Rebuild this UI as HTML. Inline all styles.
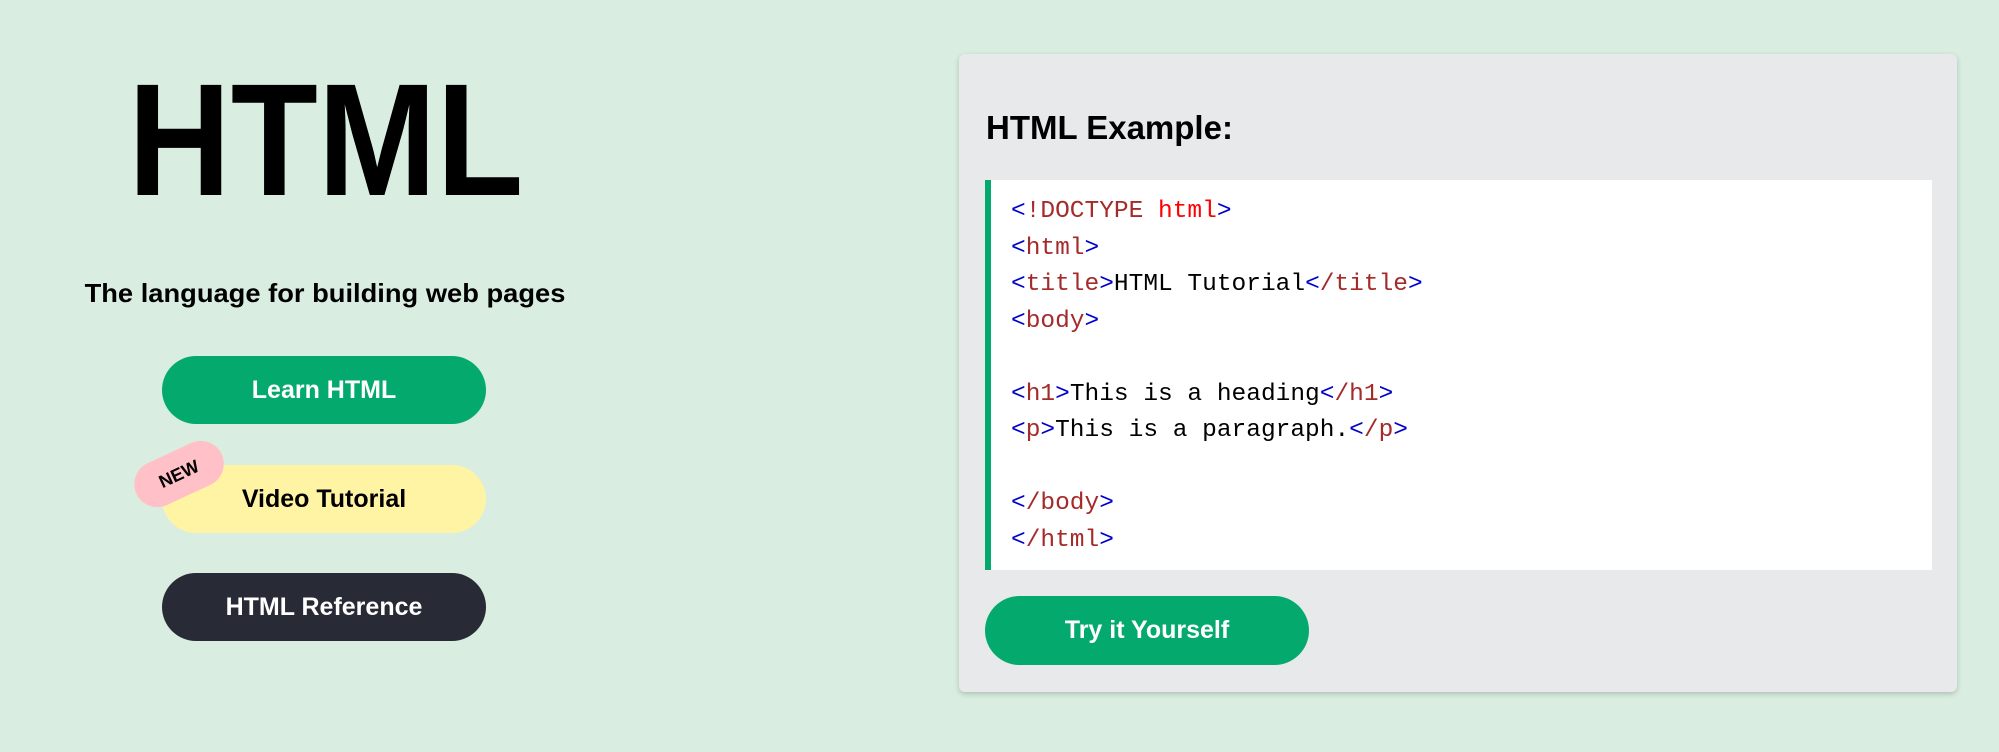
<!DOCTYPE html>
<html><head><style>
body{margin:0;width:1999px;height:752px;background:#d9eee1;font-family:"Liberation Sans",sans-serif;position:relative;overflow:hidden}
.big{position:absolute;left:128px;top:60px;width:395px;font-size:160px;font-weight:bold;line-height:160px;color:#000;white-space:nowrap;transform-origin:0 0;transform:scaleX(0.89)}
.tag{position:absolute;left:40px;width:570px;top:278px;text-align:center;font-size:26px;font-weight:bold;transform:scaleX(1.05)}
.btn{position:absolute;left:162px;width:324px;height:68px;border-radius:34px;text-align:center;line-height:68px;font-size:25px;font-weight:bold}
.new{position:absolute;left:132px;top:451px;width:94px;height:46px;border-radius:23px;background:#ffc0c7;transform:rotate(-25deg);text-align:center;line-height:46px;font-size:18px;font-weight:bold;color:#000}
.panel{position:absolute;left:959px;top:54px;width:998px;height:638px;background:#e7e9eb;border-radius:6px;box-shadow:0 2px 6px rgba(0,0,0,.2)}
.h{position:absolute;left:27px;top:55px;font-size:33px;font-weight:bold}
.code{position:absolute;left:26px;top:126px;width:947px;height:390px;background:#fff;border-left:6px solid #04aa6d;box-sizing:border-box;padding:14px 0 0 20px;font-family:"Liberation Mono",monospace;font-size:24.5px;line-height:36.5px;white-space:pre;color:#000}
.b{color:#0000cd}.n{color:#a52a2a}.r{color:#ff0000}
.try{position:absolute;left:26px;top:542px;width:324px;height:69px;border-radius:35px;background:#04aa6d;color:#fff;text-align:center;line-height:69px;font-size:25px;font-weight:bold}
</style></head><body>
<div class="big">HTML</div>
<div class="tag">The language for building web pages</div>
<div class="btn" style="top:356px;background:#04aa6d;color:#fff">Learn HTML</div>
<div class="btn" style="top:465px;background:#fff4a3;color:#000">Video Tutorial</div>
<div class="new">NEW</div>
<div class="btn" style="top:573px;background:#282a35;color:#fff">HTML Reference</div>
<div class="panel">
<div class="h">HTML Example:</div>
<div class="code"><span class="b">&lt;</span><span class="n">!DOCTYPE</span> <span class="r">html</span><span class="b">&gt;</span>
<span class="b">&lt;</span><span class="n">html</span><span class="b">&gt;</span>
<span class="b">&lt;</span><span class="n">title</span><span class="b">&gt;</span>HTML Tutorial<span class="b">&lt;</span><span class="n">/title</span><span class="b">&gt;</span>
<span class="b">&lt;</span><span class="n">body</span><span class="b">&gt;</span>

<span class="b">&lt;</span><span class="n">h1</span><span class="b">&gt;</span>This is a heading<span class="b">&lt;</span><span class="n">/h1</span><span class="b">&gt;</span>
<span class="b">&lt;</span><span class="n">p</span><span class="b">&gt;</span>This is a paragraph.<span class="b">&lt;</span><span class="n">/p</span><span class="b">&gt;</span>

<span class="b">&lt;</span><span class="n">/body</span><span class="b">&gt;</span>
<span class="b">&lt;</span><span class="n">/html</span><span class="b">&gt;</span></div>
<div class="try">Try it Yourself</div>
</div>
</body></html>
